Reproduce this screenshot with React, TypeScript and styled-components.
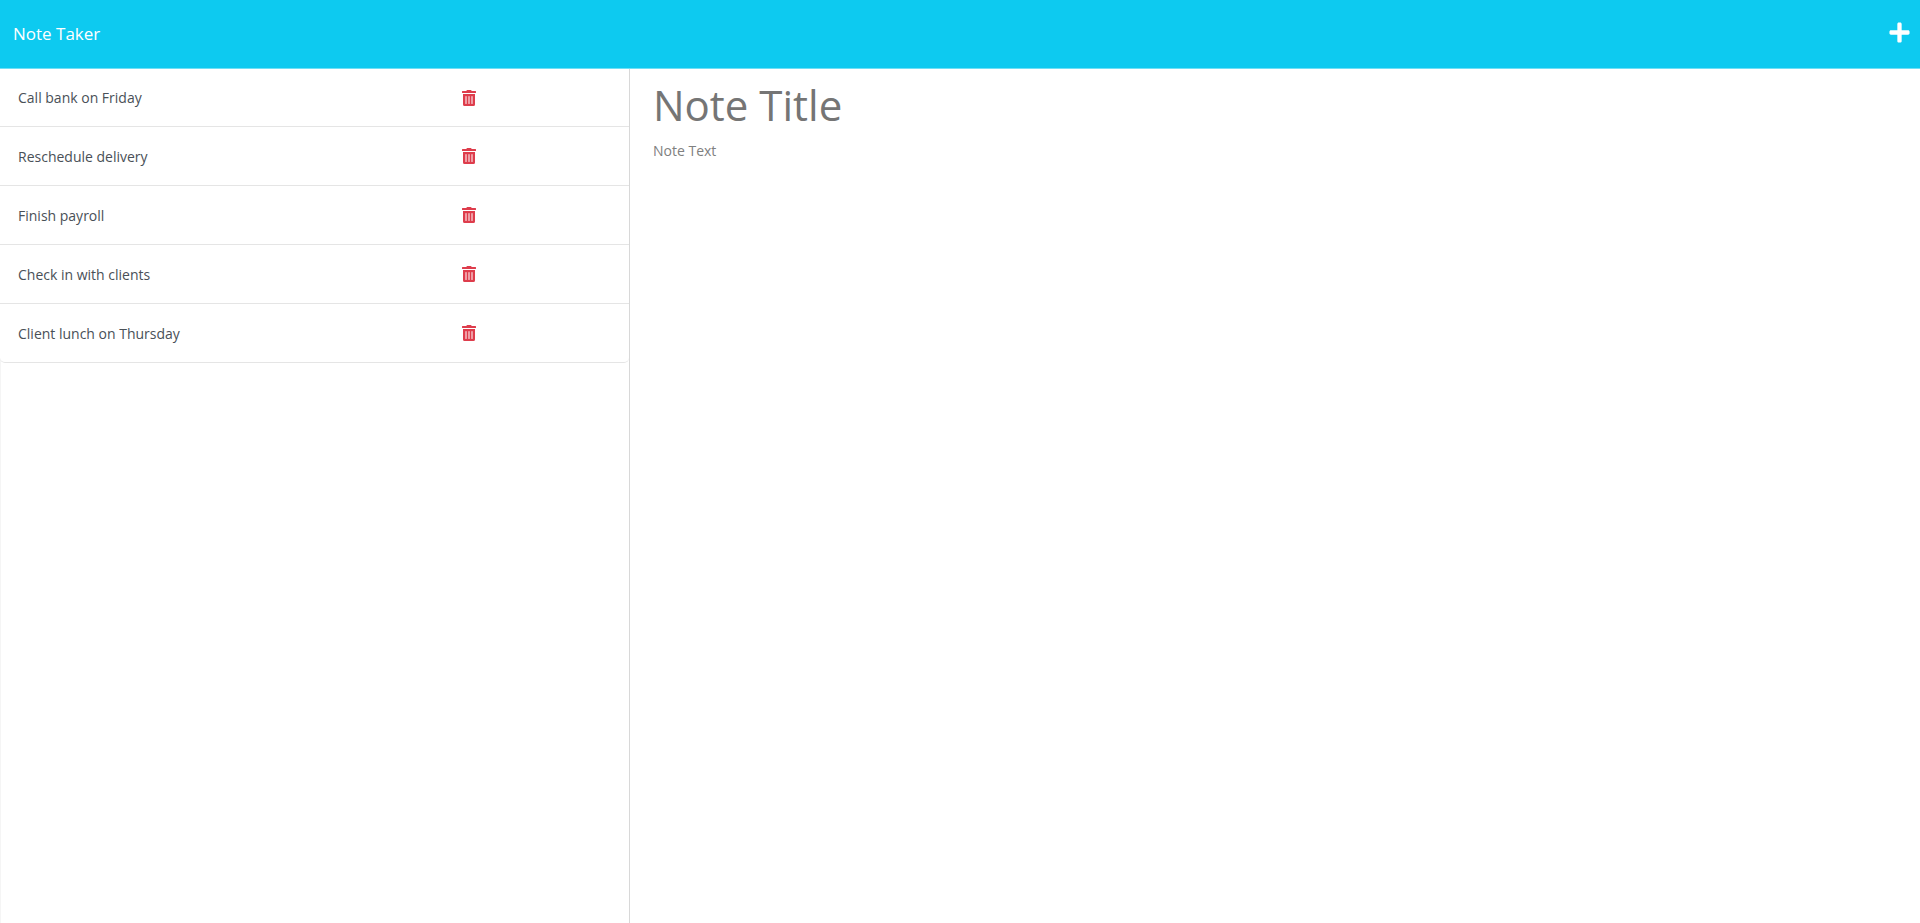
import React, { useState } from "react";
import styled, { createGlobalStyle } from "styled-components";
import { FaPlus, FaTrashAlt } from "react-icons/fa";

const GlobalStyle = createGlobalStyle`
  *, *::before, *::after { box-sizing: border-box; }
  body {
    margin: 0;
    background: #fff;
    font-family: "Segoe UI", "Open Sans", "Noto Sans", sans-serif;
    font-size: 14px;
    line-height: 22px;
    color: #495057;
  }
  button, input, textarea { font: inherit; }
`;

const Page = styled.div`
  display: flex;
  flex-direction: column;
  min-height: 100vh;
`;

const Navbar = styled.header`
  display: flex;
  align-items: center;
  justify-content: space-between;
  height: 69px;
  padding: 0 9px 4px 13px;
  background: #0dcaf0;
  border-bottom: 1px solid #6edff6;
`;

const Brand = styled.a`
  padding-top: 4px;
  color: #fff;
  font-size: 17px;
  line-height: 28px;
  text-decoration: none;
`;

const IconButton = styled.button`
  display: flex;
  padding: 0;
  border: 0;
  background: none;
  color: #fff;
  cursor: pointer;
`;

const DeleteButton = styled(IconButton)`
  color: #de3d4c;
`;

const Columns = styled.main`
  display: flex;
  flex: 1;
`;

const Sidebar = styled.aside`
  width: calc(100% / 3 - 10px);
  border-left: 1px solid #f5f5f5;
  border-right: 1px solid #d8d8d8;
`;

const NoteList = styled.ul`
  margin: 0 0 0 -1px;
  padding: 0;
  list-style: none;
`;

const NoteRow = styled.li`
  display: flex;
  align-items: center;
  height: 59px;
  padding-left: 18px;
  border-bottom: 1px solid #e5e5e5;
  background: #fff;

  &:first-child { height: 58px; }
  &:last-child { border-radius: 0 0 5px 5px; }
`;

const NoteName = styled.span`
  width: calc(75% - 15px);
  padding-top: 1px;
`;

const Editor = styled.form`
  display: flex;
  flex: 1;
  flex-direction: column;
  padding: 6px 23px;
`;

const TitleInput = styled.input`
  width: 100%;
  height: 60px;
  padding: 0;
  border: 0;
  outline: 0;
  font-size: 42px;
  line-height: 60px;
  color: #212529;

  &::placeholder { color: #757575; opacity: 1; }
`;

const TextInput = styled.textarea`
  flex: 1;
  width: 100%;
  padding: 5px 0;
  border: 0;
  outline: 0;
  resize: none;
  color: #212529;

  &::placeholder { color: #808080; opacity: 1; }
`;

const initialNotes = [
  "Call bank on Friday",
  "Reschedule delivery",
  "Finish payroll",
  "Check in with clients",
  "Client lunch on Thursday",
];

export default function App() {
  const [notes, setNotes] = useState(initialNotes);
  const [title, setTitle] = useState("");
  const [text, setText] = useState("");

  const clearEditor = () => {
    setTitle("");
    setText("");
  };

  return (
    <Page>
      <GlobalStyle />
      <Navbar>
        <Brand href="#">Note Taker</Brand>
        <IconButton type="button" aria-label="New note" onClick={clearEditor}>
          <FaPlus size={23} />
        </IconButton>
      </Navbar>
      <Columns>
        <Sidebar>
          <NoteList>
            {notes.map((note) => (
              <NoteRow key={note}>
                <NoteName>{note}</NoteName>
                <DeleteButton
                  type="button"
                  aria-label={`Delete ${note}`}
                  onClick={() => setNotes(notes.filter((n) => n !== note))}
                >
                  <FaTrashAlt size={16} />
                </DeleteButton>
              </NoteRow>
            ))}
          </NoteList>
        </Sidebar>
        <Editor>
          <TitleInput
            aria-label="Note Title"
            placeholder="Note Title"
            value={title}
            onChange={(e) => setTitle(e.target.value)}
          />
          <TextInput
            aria-label="Note Text"
            placeholder="Note Text"
            value={text}
            onChange={(e) => setText(e.target.value)}
          />
        </Editor>
      </Columns>
    </Page>
  );
}
